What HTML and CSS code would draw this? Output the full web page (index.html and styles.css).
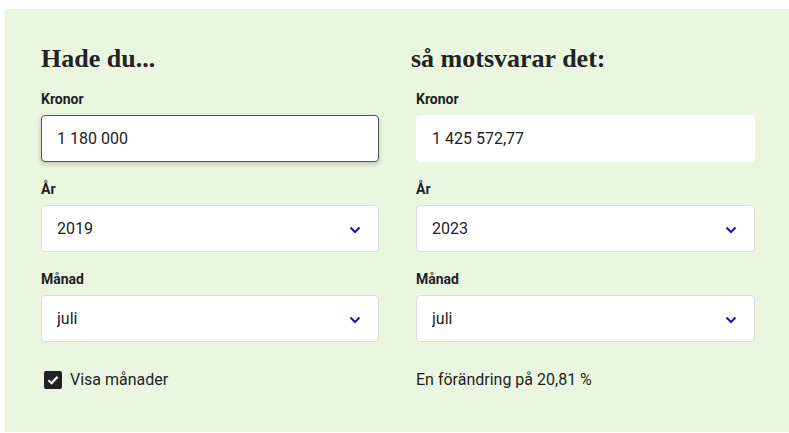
FILE: index.html
```html
<!DOCTYPE html>
<html lang="sv">
<head>
  <meta charset="UTF-8" />
  <meta name="viewport" content="width=device-width, initial-scale=1.0"/>
  <title>Räkna om kronor</title>
  <link rel="stylesheet" href="styles.css">
</head>
<body>
  <div class="panel">
    <div class="col">
      <h2>Hade du...</h2>

      <label class="label" for="amountFrom">Kronor</label>
      <input class="field field-active" id="amountFrom" type="text" value="1 180 000">

      <label class="label" for="yearFrom">År</label>
      <div class="select-wrap">
        <select class="field" id="yearFrom">
          <option>2019</option>
        </select>
        <svg class="chevron" width="12" height="8" viewBox="0 0 12 8"><path d="M1.5 1.5 L6 6 L10.5 1.5" fill="none" stroke="#2d06c4" stroke-width="2"/></svg>
      </div>

      <label class="label" for="monthFrom">Månad</label>
      <div class="select-wrap">
        <select class="field" id="monthFrom">
          <option>juli</option>
        </select>
        <svg class="chevron" width="12" height="8" viewBox="0 0 12 8"><path d="M1.5 1.5 L6 6 L10.5 1.5" fill="none" stroke="#2d06c4" stroke-width="2"/></svg>
      </div>

      <label class="check-row">
        <span class="checkbox">
          <svg width="14" height="14" viewBox="0 0 14 14"><path d="M2.5 7.2 L5.6 10.2 L11.5 3.8" fill="none" stroke="#fff" stroke-width="2.2"/></svg>
        </span>
        Visa månader
      </label>
    </div>

    <div class="col">
      <h2>så motsvarar det:</h2>

      <div class="inset">
        <label class="label" for="amountTo">Kronor</label>
        <input class="field field-result" id="amountTo" type="text" value="1 425 572,77" readonly>

        <label class="label" for="yearTo">År</label>
        <div class="select-wrap">
          <select class="field" id="yearTo">
            <option>2023</option>
          </select>
          <svg class="chevron" width="12" height="8" viewBox="0 0 12 8"><path d="M1.5 1.5 L6 6 L10.5 1.5" fill="none" stroke="#2d06c4" stroke-width="2"/></svg>
        </div>

        <label class="label" for="monthTo">Månad</label>
        <div class="select-wrap">
          <select class="field" id="monthTo">
            <option>juli</option>
          </select>
          <svg class="chevron" width="12" height="8" viewBox="0 0 12 8"><path d="M1.5 1.5 L6 6 L10.5 1.5" fill="none" stroke="#2d06c4" stroke-width="2"/></svg>
        </div>

        <p class="change">En förändring på 20,81 %</p>
      </div>
    </div>
  </div>
</body>
</html>
```

FILE: styles.css
```css
body {
  margin: 0;
  background-color: white;
  font-family: Roboto, "Liberation Sans", Arial, sans-serif;
  color: #1e1e1e;
}

.panel {
  margin: 9px 0 4px 5px;
  padding: 34px 34px 40px 36px;
  background-color: #eaf7e0;
  display: grid;
  grid-template-columns: 338px 344px;
  column-gap: 32px;
}

.col {
  display: flex;
  flex-direction: column;
}

.inset {
  display: flex;
  flex-direction: column;
  padding-left: 5px;
}

h2 {
  margin: 0 0 14px;
  font-family: "Liberation Serif", "Times New Roman", serif;
  font-size: 26px;
  line-height: 32px;
  font-weight: bold;
  color: #222;
}

.label {
  display: block;
  font-size: 14px;
  line-height: 20px;
  font-weight: bold;
  margin-bottom: 6px;
}

.field {
  display: block;
  width: 100%;
  height: 47px;
  box-sizing: border-box;
  margin: 0 0 17px;
  padding: 0 15px;
  font-family: Roboto, "Liberation Sans", Arial, sans-serif;
  font-size: 16px;
  color: #222;
  background-color: white;
  border: 1px solid #dcdcdc;
  border-radius: 4px;
  outline: none;
  appearance: none;
}

.field-active {
  border-color: #555;
  box-shadow: 0 2px 5px rgba(0, 0, 0, 0.22);
}

.field-result {
  border-color: white;
}

.select-wrap {
  position: relative;
}

.chevron {
  position: absolute;
  right: 18px;
  top: 21px;
}

.check-row {
  display: flex;
  align-items: center;
  gap: 8px;
  margin-top: 9px;
  margin-left: 3px;
  font-size: 16px;
  line-height: 24px;
}

.checkbox {
  width: 18px;
  height: 18px;
  border-radius: 2px;
  background-color: #222;
  display: flex;
  align-items: center;
  justify-content: center;
}

.change {
  margin: 9px 0 0;
  font-size: 16px;
  line-height: 24px;
}
```
